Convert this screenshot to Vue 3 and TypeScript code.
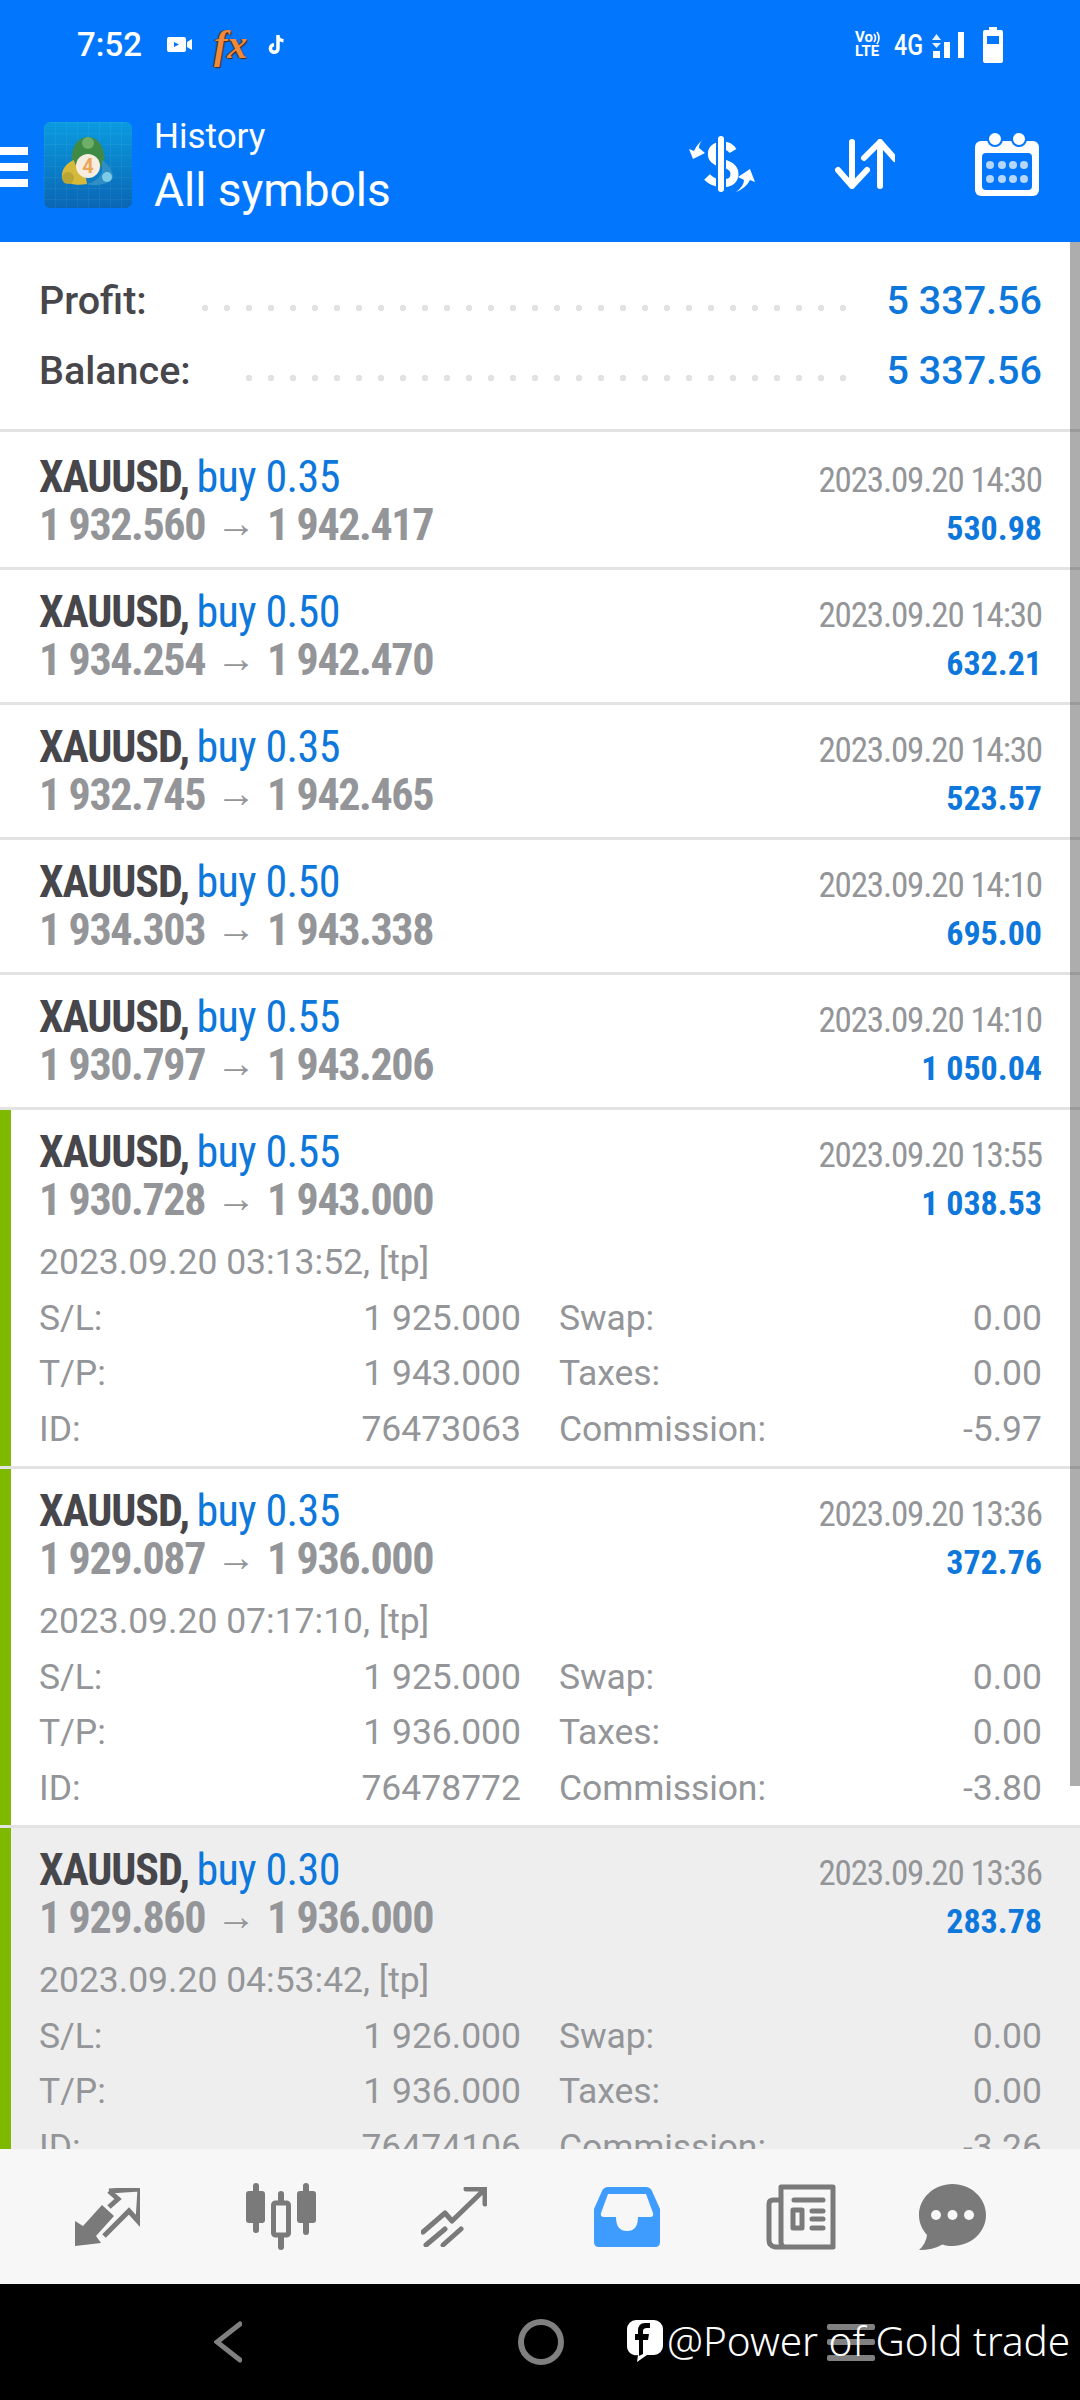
<script setup lang="ts">
interface Deal {
  lots: string;
  open: string;
  close: string;
  time: string;
  profit: string;
  detail?: {
    date: string;
    sl: string;
    tp: string;
    id: string;
    commission: string;
  };
  selected?: boolean;
}

const deals: Deal[] = [
  { lots: '0.35', open: '1 932.560', close: '1 942.417', time: '2023.09.20 14:30', profit: '530.98' },
  { lots: '0.50', open: '1 934.254', close: '1 942.470', time: '2023.09.20 14:30', profit: '632.21' },
  { lots: '0.35', open: '1 932.745', close: '1 942.465', time: '2023.09.20 14:30', profit: '523.57' },
  { lots: '0.50', open: '1 934.303', close: '1 943.338', time: '2023.09.20 14:10', profit: '695.00' },
  { lots: '0.55', open: '1 930.797', close: '1 943.206', time: '2023.09.20 14:10', profit: '1 050.04' },
  {
    lots: '0.55', open: '1 930.728', close: '1 943.000', time: '2023.09.20 13:55', profit: '1 038.53',
    detail: { date: '2023.09.20 03:13:52, [tp]', sl: '1 925.000', tp: '1 943.000', id: '76473063', commission: '-5.97' },
  },
  {
    lots: '0.35', open: '1 929.087', close: '1 936.000', time: '2023.09.20 13:36', profit: '372.76',
    detail: { date: '2023.09.20 07:17:10, [tp]', sl: '1 925.000', tp: '1 936.000', id: '76478772', commission: '-3.80' },
  },
  {
    lots: '0.30', open: '1 929.860', close: '1 936.000', time: '2023.09.20 13:36', profit: '283.78', selected: true,
    detail: { date: '2023.09.20 04:53:42, [tp]', sl: '1 926.000', tp: '1 936.000', id: '76474106', commission: '-3.26' },
  },
];
</script>

<template>
  <div class="phone">
    <header class="top">
      <div class="status">
        <div class="status-left">
          <span class="clock">7:52</span>
          <svg class="ic-video" viewBox="0 0 25 15" width="25" height="15">
            <path fill="#fff" fill-rule="evenodd" d="M2 0h15a2 2 0 0 1 2 2v11a2 2 0 0 1-2 2H2a2 2 0 0 1-2-2V2a2 2 0 0 1 2-2zM7 5v5l5-2.500z" />
            <path fill="#fff" d="M20 5l5-3v11l-5-3z" />
          </svg>
          <span class="fx">fx</span>
          <svg class="ic-tiktok" viewBox="0 0 17 19" width="17" height="19">
            <path fill="none" stroke="#fff" stroke-width="3.500" d="M10 0v13.500a3.800 3.800 0 1 1-4-3.800M10 1.500c.5 2.500 2.500 4 5.500 4.200" />
          </svg>
        </div>
        <div class="status-right">
          <div class="volte">
            <div class="vo-row">
              <span>Vo</span>
              <svg viewBox="0 0 7 14" width="7" height="14">
                <path fill="none" stroke="#fff" stroke-width="1.600" d="M1 3q3 4 0 8M4 1q4 6 0 12" />
              </svg>
            </div>
            <span>LTE</span>
          </div>
          <span class="net">4G</span>
          <svg viewBox="0 0 33 27" width="33" height="27" class="ic-signal">
            <path fill="#fff" d="M0 9l4.500-6L9 9zM0 12h9l-4.500 5z" opacity=".9" />
            <rect x="1" y="20" width="7" height="7" fill="#fff" />
            <rect x="12" y="11" width="6" height="16" fill="#fff" />
            <rect x="26" y="1" width="6" height="26" fill="#fff" />
          </svg>
          <svg viewBox="0 0 20 36" width="20" height="36" class="ic-battery">
            <path fill="#fff" fill-rule="evenodd" d="M6 0h8v3h4a2 2 0 0 1 2 2v29a2 2 0 0 1-2 2H2a2 2 0 0 1-2-2V5a2 2 0 0 1 2-2h4zM4 9v8h12V9z" />
          </svg>
        </div>
      </div>
      <div class="toolbar">
        <div class="burger"><i></i><i></i><i></i></div>
        <div class="logo">
          <svg viewBox="0 0 88 86" width="88" height="86">
            <defs>
              <linearGradient id="logoBg" x1="0" y1="0" x2="0" y2="1">
                <stop offset="0" stop-color="#0a9be0" />
                <stop offset="1" stop-color="#0a66b4" />
              </linearGradient>
              <pattern id="logoGrid" width="11" height="11" patternUnits="userSpaceOnUse">
                <path d="M11 0H0v11" fill="none" stroke="#fff" stroke-opacity=".1" />
              </pattern>
            </defs>
            <rect width="88" height="86" rx="6" fill="url(#logoBg)" />
            <rect width="88" height="86" rx="6" fill="url(#logoGrid)" />
            <path d="M44 15c-8 0-15 7-16 17-1 6 0 10 3 13l13-6 13 6c3-3 4-7 3-13-1-10-8-17-16-17z" fill="#3f8a45" />
            <circle cx="44" cy="21" r="6" fill="#6fae66" />
            <path d="M30 38c-8 3-13 10-12 18 4 6 14 8 25 6l-2-12c-6-1-10-6-11-12z" fill="#d4b93a" />
            <circle cx="24" cy="56" r="6" fill="#b9a436" />
            <path d="M58 38c6 4 11 10 11 18-4 6-16 9-27 6 8-2 14-6 16-12z" fill="#2f8fc4" />
            <circle cx="63" cy="55" r="5" fill="#7ccbe8" />
            <circle cx="44" cy="44" r="12" fill="#f6ece0" />
          </svg>
          <span class="logo-four">4</span>
        </div>
        <div class="titles">
          <span class="title-small">History</span>
          <span class="title-big">All symbols</span>
        </div>
        <div class="actions">
          <svg viewBox="0 0 67 56" width="67" height="56">
            <path fill="none" stroke="#fff" stroke-width="8" d="M45 15C40 7 26 8 24 16c-1 7 4 10 9 11 11 2 15 7 13 14-2 8-18 9-27 0" />
            <rect x="28" y="0" width="10" height="56" fill="#0277fd" />
            <rect x="30" y="0" width="6" height="56" rx="3" fill="#fff" />
            <path fill="#fff" d="M20 0q-9 5-9 12l6 5-12 6-4-10 5 2q4-9 14-15zM48 56q8-6 8-12l-6-3 12-8 5 13-5-2q-4 8-14 12z" />
          </svg>
          <svg viewBox="0 0 60 50" width="60" height="50">
            <path fill="none" stroke="#fff" stroke-width="6" stroke-linecap="round" stroke-linejoin="round" d="M17 3v44M3 31l14 16 15-16M45 47V3M29 19L45 3l15 17" />
          </svg>
          <svg viewBox="0 0 64 63" width="64" height="63">
            <rect y="8" width="64" height="55" rx="6" fill="#fff" />
            <rect x="7" y="20" width="50" height="37" rx="4" fill="#0277fd" />
            <circle cx="20" cy="6" r="7" fill="#fff" stroke="#0277fd" stroke-width="2" />
            <circle cx="44" cy="6" r="7" fill="#fff" stroke="#0277fd" stroke-width="2" />
            <g fill="#b5d7ff">
              <circle cx="15" cy="32" r="4" /><circle cx="27" cy="32" r="4" /><circle cx="38" cy="32" r="4" /><circle cx="49" cy="32" r="4" />
              <circle cx="15" cy="46" r="4" /><circle cx="27" cy="46" r="4" /><circle cx="38" cy="46" r="4" /><circle cx="49" cy="46" r="4" />
            </g>
          </svg>
        </div>
      </div>
    </header>

    <main class="list">
      <section class="summary">
        <div class="sum-row">
          <span class="sum-label">Profit:</span><span class="dots"></span><span class="sum-value">5 337.56</span>
        </div>
        <div class="sum-row">
          <span class="sum-label">Balance:</span><span class="dots"></span><span class="sum-value">5 337.56</span>
        </div>
      </section>

      <article v-for="(d, i) in deals" :key="i" class="deal" :class="{ first: i === 0, selected: d.selected }">
        <div class="deal-inner" :class="{ open: d.detail }">
          <div class="line">
            <span class="cond"><b class="sym">XAUUSD,</b> <span class="side">buy {{ d.lots }}</span></span>
            <span class="cond time">{{ d.time }}</span>
          </div>
          <div class="line">
            <span class="cond prices">{{ d.open }}<span class="arrow">→</span>{{ d.close }}</span>
            <span class="cond profit">{{ d.profit }}</span>
          </div>
          <div v-if="d.detail" class="detail">
            <div class="detail-date">{{ d.detail.date }}</div>
            <div class="grid">
              <span>S/L:</span><span class="val">{{ d.detail.sl }}</span><span class="lab2">Swap:</span><span class="val">0.00</span>
              <span>T/P:</span><span class="val">{{ d.detail.tp }}</span><span class="lab2">Taxes:</span><span class="val">0.00</span>
              <span>ID:</span><span class="val">{{ d.detail.id }}</span><span class="lab2">Commission:</span><span class="val">{{ d.detail.commission }}</span>
            </div>
          </div>
        </div>
      </article>
      <div class="scrollbar"></div>
    </main>

    <nav class="tabs">
      <svg viewBox="0 0 65 58" width="65" height="58">
        <path fill="#7a7a7a" d="M0 58V33l8 5 19-21 12 11-18 20 5 7z" />
        <path fill="none" stroke="#7a7a7a" stroke-width="5" d="M34 3l31-2-2 32-9-10-25 25M34 3l9 8-9 8" />
      </svg>
      <svg viewBox="0 0 70 67" width="70" height="67">
        <g fill="none" stroke="#7a7a7a" stroke-width="6" stroke-linecap="round">
          <path d="M10 3v44M35 11v53M60 3v46" />
        </g>
        <rect y="8" width="19" height="32" rx="3" fill="#7a7a7a" />
        <rect x="51" y="8" width="19" height="32" rx="3" fill="#7a7a7a" />
        <rect x="27.500" y="20" width="15" height="32" rx="2" fill="#f7f7f7" stroke="#7a7a7a" stroke-width="5" />
      </svg>
      <svg viewBox="0 0 66 60" width="66" height="60">
        <path fill="none" stroke="#7a7a7a" stroke-width="5" stroke-linecap="round" stroke-linejoin="round" d="M2 45l22-19 7 8L63 3M45 2h19v15M5 58l19-16M22 58l18-16" />
      </svg>
      <svg viewBox="0 0 67 60" width="67" height="60">
        <path fill="#3f9cff" d="M14 0h38q4 0 6 4l8 18v33q0 5-5 5H5q-5 0-5-5V22L8 4q2-4 6-4z" />
        <path fill="#f7f7f7" d="M14 7h38l7 19q1 4-3 4H44q0 14-11 14T22 30H10q-4 0-3-4z" />
      </svg>
      <svg viewBox="0 0 70 66" width="70" height="66">
        <g fill="none" stroke="#7a7a7a" stroke-width="5" stroke-linejoin="round">
          <path d="M18 63c-2-1-3-2-3-5V3h52v60H9q-6-1-6-7V20q0-4 4-4h8" />
          <rect x="27" y="26" width="9" height="18" />
        </g>
        <path fill="none" stroke="#7a7a7a" stroke-width="5" stroke-linecap="round" d="M28 16h29M46 27h11M46 35h11M46 44h11" />
      </svg>
      <svg viewBox="0 0 67 66" width="67" height="66">
        <path fill="#7a7a7a" d="M33.500 0C52 0 67 14 67 31S52 62 33.500 62c-4 0-7-.5-10-1.500Q14 66 0 66q7-6 8-15C3 45 0 39 0 31 0 14 15 0 33.500 0z" />
        <g fill="#f7f7f7"><circle cx="17" cy="31" r="5" /><circle cx="33.500" cy="31" r="5" /><circle cx="50" cy="31" r="5" /></g>
      </svg>
    </nav>

    <footer class="sysbar">
      <svg class="sys-back" viewBox="0 0 28 42" width="28" height="42">
        <path fill="none" stroke="#808080" stroke-width="5" stroke-linecap="round" d="M26 3L3 21l23 18" />
      </svg>
      <span class="sys-home"></span>
      <div class="sys-recents"><i></i><i></i><i></i></div>
      <div class="watermark">
        <svg viewBox="0 0 36 42" width="36" height="42">
          <path fill="#fff" fill-rule="evenodd" d="M9 0h18a9 9 0 0 1 9 9v17a9 9 0 0 1-9 9h-7l-10 7 1-7a9 9 0 0 1-11-9V9a9 9 0 0 1 9-9zM12 36l4-2V20h5l1-6h-6v-3q0-3 4-3h3V3h-5q-7 0-7 8v3H8v6h4z" />
        </svg>
        <span>@Power of Gold trade</span>
      </div>
    </footer>
  </div>
</template>

<style>
html, body { margin: 0; background: #fff; }
</style>

<style scoped>
.phone {
  width: 1080px;
  height: 2400px;
  display: flex;
  flex-direction: column;
  overflow: hidden;
  position: relative;
  font-family: Roboto, "Liberation Sans", sans-serif;
  background: #fff;
}
.top {
  height: 242px;
  flex: none;
  background: #0277fd;
  color: #fff;
}
.status {
  height: 80px;
  display: flex;
  justify-content: space-between;
  align-items: center;
  padding: 9px 77px 0 77px;
  box-sizing: border-box;
}
.status-left, .status-right { display: flex; align-items: center; }
.clock { font-size: 33px; font-weight: 500; width: 90px; }
.ic-video { margin-right: 22px; }
.fx {
  width: 54px;
  font: italic 700 40px "Liberation Serif", serif;
  color: #f08a3c;
  text-shadow: 1px 1px 1px #4a2a10, -1px 0 1px #4a2a10;
}
.volte {
  width: 27px;
  margin-right: 12px;
  display: flex;
  flex-direction: column;
  font-size: 15px;
  font-weight: 700;
  line-height: 13.500px;
}
.vo-row { display: flex; align-items: center; gap: 0; }
.net {
  font-size: 29px;
  font-weight: 500;
  display: inline-block;
  transform: scaleX(.8);
  transform-origin: left;
  width: 38px;
}
.ic-signal { margin-right: 18px; }
.toolbar {
  height: 162px;
  display: flex;
  align-items: center;
  position: relative;
}
.burger {
  width: 28px;
  display: flex;
  flex-direction: column;
  gap: 8px;
  margin: 11px 16px 0 0;
}
.burger i { display: block; height: 8px; background: #fff; }
.logo {
  margin-top: 8px;
  width: 88px;
  height: 86px;
  position: relative;
}
.logo svg { display: block; }
.logo-four {
  position: absolute;
  left: 0;
  right: 0;
  top: 32px;
  text-align: center;
  font-size: 20px;
  line-height: 24px;
  font-weight: 700;
  color: #eda55a;
}
.titles {
  display: flex;
  flex-direction: column;
  margin: 12px 0 0 22px;
}
.title-small { font-size: 35px; line-height: 46px; font-weight: 400; }
.title-big { font-size: 46px; line-height: 60px; font-weight: 400; }
.actions {
  margin: 6px 0 0 auto;
  display: flex;
  align-items: center;
  gap: 80px;
  padding-right: 41px;
}
.list {
  flex: 1;
  min-height: 0;
  overflow: hidden;
  position: relative;
}
.summary {
  padding: 24px 38px 23px 39px;
  border-bottom: 3px solid #e3e3e3;
}
.sum-row {
  height: 70px;
  display: flex;
  align-items: baseline;
  font-size: 39.500px;
  line-height: 70px;
  font-weight: 500;
}
.sum-label { color: #46464b; }
.dots {
  flex: 1;
  height: 6px;
  margin: 0 36px 0 55px;
  align-self: center;
  position: relative;
  top: 7px;
  background: radial-gradient(circle at 3px 3px, #e2e2e2 3px, transparent 3.500px) 0 0 / 22px 6px repeat-x;
}
.sum-value { color: #0d77dc; }
.deal {
  border-bottom: 3px solid #e3e3e3;
}
.deal.first { margin-top: 3px; }
.deal.selected { background: #eee; }
.deal-inner {
  padding: 18px 38px 18px 39px;
}
.deal-inner.open {
  padding: 18px 38px 9px 28px;
  border-left: 11px solid #7fb800;
}
.line {
  height: 48px;
  line-height: 48px;
  display: flex;
  justify-content: space-between;
  align-items: baseline;
}
.cond {
  font-stretch: 75%;
  white-space: nowrap;
}
.sym { font-size: 44px; font-weight: 700; color: #46464b; letter-spacing: -1.100px; }
.side { font-size: 44px; color: #0d77dc; letter-spacing: -.600px; margin-left: 4px; }
.time { font-size: 35px; color: #939598; letter-spacing: -1.150px; }
.prices { font-size: 44px; font-weight: 700; color: #939598; letter-spacing: -1.400px; }
.arrow {
  font-weight: 400;
  font-size: 40px;
  letter-spacing: 0;
  margin: 0 11px;
  position: relative;
  top: -3px;
}
.profit { font-size: 34px; font-weight: 700; color: #0d77dc; }
.detail {
  margin-top: 11px;
  font-size: 35.500px;
  line-height: 55.500px;
  color: #939598;
}
.grid {
  display: grid;
  grid-template-columns: 222px 260px 38px 1fr;
}
.grid .val { text-align: right; }
.grid .lab2 { padding-left: 38px; white-space: nowrap; width: 0; letter-spacing: -.100px; }
.scrollbar {
  position: absolute;
  top: 0;
  right: 0;
  width: 10px;
  height: 1544px;
  background: rgba(0, 0, 0, .32);
}
.tabs {
  height: 135px;
  flex: none;
  background: #f7f7f7;
  display: grid;
  grid-template-columns: repeat(5, 173.400px) 130px;
  padding-left: 21px;
  align-items: center;
  justify-items: center;
}
.sysbar {
  height: 116px;
  flex: none;
  background: #000;
  position: relative;
  display: flex;
  align-items: center;
  padding-left: 214px;
}
.sys-home {
  width: 34px;
  height: 34px;
  margin-left: 276px;
  border: 6px solid #808080;
  border-radius: 50%;
}
.sys-recents {
  margin-left: 263px;
  width: 48px;
  display: flex;
  flex-direction: column;
  gap: 9.500px;
}
.sys-recents i { display: block; height: 6px; border-radius: 2px; background: #808080; }
.watermark {
  position: absolute;
  left: 627px;
  top: 36px;
  display: flex;
  align-items: center;
  gap: 4px;
  color: #fff;
  font-size: 40.500px;
  font-weight: 300;
  line-height: 42px;
  white-space: nowrap;
  font-family: "Noto Sans", Roboto, sans-serif;
}
</style>
